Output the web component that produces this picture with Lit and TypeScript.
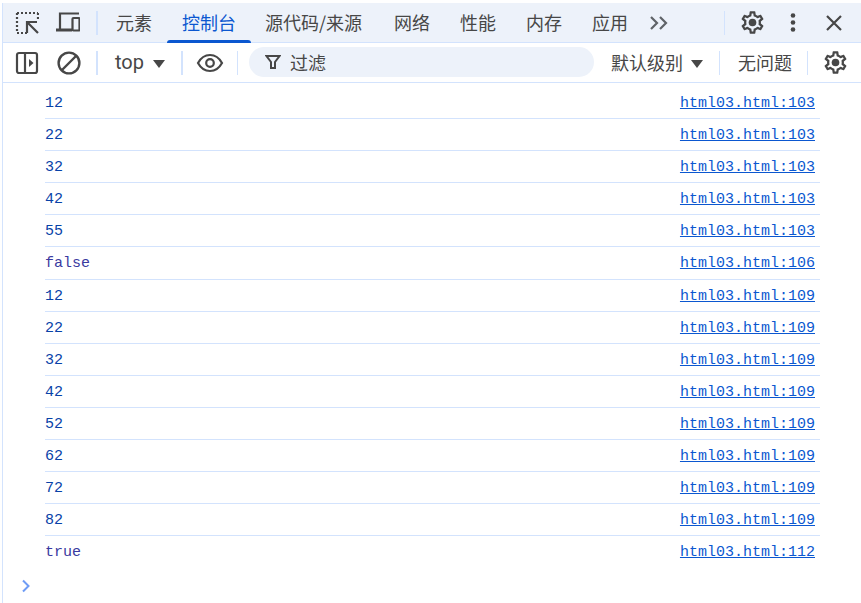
import { LitElement, html, css } from "lit";
import { customElement } from "lit/decorators.js";

const GEAR = "M19.43 12.98c.04-.32.07-.64.07-.98 0-.34-.03-.66-.07-.98l2.11-1.65c.19-.15.24-.42.12-.64l-2-3.46c-.09-.16-.26-.25-.44-.25-.06 0-.12.01-.17.03l-2.49 1c-.52-.4-1.08-.73-1.69-.98l-.38-2.65C14.46 2.18 14.25 2 14 2h-4c-.25 0-.46.18-.49.42l-.38 2.65c-.61.25-1.17.59-1.69.98l-2.49-1c-.06-.02-.12-.03-.18-.03-.17 0-.34.09-.43.25l-2 3.46c-.13.22-.07.49.12.64l2.11 1.65c-.04.32-.07.65-.07.98 0 .33.03.66.07.98l-2.11 1.65c-.19.15-.24.42-.12.64l2 3.46c.09.16.26.25.44.25.06 0 .12-.01.17-.03l2.49-1c.52.4 1.08.73 1.69.98l.38 2.65c.03.24.24.42.49.42h4c.25 0 .46-.18.49-.42l.38-2.65c.61-.25 1.17-.59 1.69-.98l2.49 1c.06.02.12.03.18.03.17 0 .34-.09.43-.25l2-3.46c.12-.22.07-.49-.12-.64l-2.11-1.65zm-1.98-1.71c.04.31.05.52.05.73 0 .21-.02.43-.05.73l-.14 1.13.89.7 1.08.84-.7 1.21-1.27-.51-1.04-.42-.9.68c-.43.32-.84.56-1.25.73l-1.06.43-.16 1.13-.2 1.35h-1.4l-.19-1.35-.16-1.13-1.06-.43c-.43-.18-.83-.41-1.23-.71l-.91-.7-1.06.43-1.27.51-.7-1.21 1.08-.84.89-.7-.14-1.13c-.03-.31-.05-.54-.05-.74s.02-.43.05-.73l.14-1.13-.89-.7-1.08-.84.7-1.21 1.27.51 1.04.42.9-.68c.43-.32.84-.56 1.25-.73l1.06-.43.16-1.13.2-1.35h1.39l.19 1.35.16 1.13 1.06.43c.43.18.83.41 1.23.71l.91.7 1.06-.43 1.27-.51.7 1.21-1.07.85-.89.7.14 1.13z";

const gear = html`<svg class="gear" viewBox="0 0 24 24"><path fill="#474747" d=${GEAR}></path><circle cx="12" cy="12" r="3.4" fill="#474747"></circle></svg>`;

const inspect = html`<svg class="ic" viewBox="0 0 24 24" fill="none" stroke="#474747">
  <path stroke-width="2.2" stroke-dasharray="2 2" d="M2 2H23M2 2V22H12M23 2V9"></path>
  <path stroke-width="2.2" d="M12 22V11H22M12 11L23 22" ></path></svg>`;
const device = html`<svg class="ic" viewBox="0 0 24 24" fill="none" stroke="#474747" stroke-width="2.2">
  <path d="M4 19V2.5H23"></path><path d="M0 19H16" stroke-width="3"></path><rect x="16.5" y="7" width="7" height="12.5" rx="1"></rect></svg>`;
const dock = html`<svg class="ic" viewBox="0 0 24 24" fill="none" stroke="#474747" stroke-width="2.2">
  <rect x="2" y="2" width="20" height="20" rx="2"></rect><path d="M10 2V22"></path><path d="M14 8L18.5 12L14 16Z" fill="#474747" stroke="none"></path></svg>`;
const block = html`<svg class="ic" viewBox="0 0 24 24" fill="none" stroke="#474747" stroke-width="2.4">
  <circle cx="12" cy="12" r="10.4"></circle><path d="M5 19L19 5"></path></svg>`;
const eye = html`<svg class="eye" viewBox="0 0 28 20" fill="none" stroke="#474747" stroke-width="2.2">
  <path d="M2 10C5 4.5 9 2 14 2S23 4.5 26 10C23 15.5 19 18 14 18S5 15.5 2 10Z"></path><circle cx="14" cy="10" r="3.8"></circle></svg>`;
const funnel = html`<svg class="funnel" viewBox="0 0 16 16" fill="none" stroke="#474747" stroke-width="2">
  <path d="M1.5 2H14.5L10 8V14H6V8Z" stroke-linejoin="miter"></path></svg>`;
const chevrons = html`<svg class="chev" viewBox="0 0 18 14" fill="none" stroke="#5f6368" stroke-width="2.2">
  <path d="M1 1L7 7L1 13M10 1L16 7L10 13"></path></svg>`;
const kebab = html`<svg class="kebab" viewBox="0 0 6 24" fill="#474747"><circle cx="3" cy="4.5" r="2.3"></circle><circle cx="3" cy="11.5" r="2.3"></circle><circle cx="3" cy="18.5" r="2.3"></circle></svg>`;
const close = html`<svg class="close" viewBox="0 0 16 16" fill="none" stroke="#474747" stroke-width="2.2"><path d="M1 1L15 15M15 1L1 15"></path></svg>`;
const prompt = html`<svg class="prompt" viewBox="0 0 9 14" fill="none" stroke="#6f9cf5" stroke-width="2"><path d="M2 1.5L7.5 7L2 12.5"></path></svg>`;

const TABS = ["元素", "控制台", "源代码/来源", "网络", "性能", "内存", "应用"];
const ROWS: [string, string][] = [
  ["12", "103"], ["22", "103"], ["32", "103"], ["42", "103"], ["55", "103"],
  ["false", "106"],
  ["12", "109"], ["22", "109"], ["32", "109"], ["42", "109"], ["52", "109"], ["62", "109"], ["72", "109"], ["82", "109"],
  ["true", "112"],
];

@customElement("app-root")
export class AppRoot extends LitElement {
  static styles = css`
    :host {
      display: block;
      height: 603px;
      box-sizing: border-box;
      padding: 3px 0 0 2px;
      background: #fff;
      font-family: "Noto Sans CJK SC", "Liberation Sans", sans-serif;
      color: #474747;
      overflow: hidden;
    }
    .frame { border-left: 1px solid #d3e3fd; height: 600px; }
    .bar {
      display: flex;
      align-items: center;
      height: 39px;
      border-bottom: 1px solid #d3e3fd;
      box-sizing: content-box;
      font-size: 18px;
      white-space: nowrap;
    }
    .tabsbar { background: #edf2fa; padding-left: 12px; }
    .tools { background: #fff; padding-left: 12px; }
    .ic { width: 24px; height: 24px; flex: none; }
    .ic + .ic { margin-left: 17px; }
    .tools .ic + .ic { margin-left: 18px; }
    .sep { width: 2px; height: 24px; background: #d3e3fd; flex: none; margin-left: 16px; }
    .tools .ic + .sep { margin-left: 15px; }
    .sep.thin { width: 1px; }
    .tab {
      position: relative;
      height: 39px;
      display: flex;
      align-items: center;
      padding: 0 15px 2px;
      box-sizing: border-box;
      flex: none;
    }
    .tab.wide { padding-left: 14px; padding-right: 17px; }
    .tabs { display: flex; margin-left: 3px; }
    .tab.active { color: #0b57d0; }
    .tab.active::after {
      content: "";
      position: absolute;
      left: 0; right: 0; bottom: -1px;
      height: 3px;
      border-radius: 3px 3px 0 0;
      background: #0b57d0;
    }
    .chev { width: 18px; height: 14px; margin-left: 7px; flex: none; }
    .sep.hr { margin-left: 56px; }
    .gear { width: 27px; height: 27px; flex: none; margin-bottom: 1px; }
    .tabsbar .gear { margin-left: 14px; }
    .kebab { width: 6px; height: 24px; margin-left: 24px; flex: none; }
    .close { width: 16px; height: 16px; margin-left: 30px; flex: none; }
    .top { margin-left: 17px; font-family: "Roboto", sans-serif; font-size: 20px; padding-bottom: 2px; }
    .tri {
      width: 0; height: 0; flex: none;
      border-left: 6px solid transparent;
      border-right: 6px solid transparent;
      border-top: 8px solid #474747;
    }
    .tri.t1 { margin: 3px 0 0 9px; }
    .sep.s2 { margin-left: 16px; }
    .eye { width: 28px; height: 20px; margin-left: 13px; flex: none; }
    .sep.s3 { margin-left: 13px; }
    .pill {
      margin-left: 11px;
      margin-bottom: 1px;
      width: 345px; height: 30px;
      flex: none;
      background: #edf2fa;
      border-radius: 15px;
      display: flex;
      align-items: center;
      padding-left: 16px;
      box-sizing: border-box;
      color: #474747;
    }
    .funnel { width: 16px; height: 16px; flex: none; }
    .pill span { margin-left: 9px; }
    .level { margin-left: 17px; padding-bottom: 2px; }
    .tri.t2 { margin: 3px 0 0 8px; }
    .sep.s4 { margin-left: 16px; }
    .issues { margin-left: 18px; padding-bottom: 2px; }
    .sep.s5 { margin-left: 15px; }
    .tools .gear { margin-left: 14px; }
    .console { padding: 3.95px 0 0 42px; }
    .row {
      width: 775px;
      height: 32.1px;
      box-sizing: border-box;
      border-bottom: 1px solid #d3e3fd;
      display: flex;
      justify-content: space-between;
      align-items: center;
      padding: 2px 5px 0 0;
      font-family: "Liberation Mono", monospace;
      font-size: 15px;
    }
    .row.last { border-bottom-color: transparent; }
    .val { color: #0842a8; }
    .val.bool { color: #3a3aa0; }
    .link { color: #0b57d0; text-decoration: underline; }
    .prompt { display: block; width: 9px; height: 14px; margin: 11px 0 0 -24px; }
  `;

  render() {
    return html`<div class="frame">
      <div class="bar tabsbar">
        ${inspect}${device}
        <div class="sep"></div>
        <div class="tabs">
          ${TABS.map((t) => html`<div class="tab ${t === "控制台" ? "active" : ""} ${t.length > 4 ? "wide" : ""}">${t}</div>`)}
        </div>
        ${chevrons}
        <div class="sep thin hr"></div>
        ${gear}${kebab}${close}
      </div>
      <div class="bar tools">
        ${dock}${block}
        <div class="sep"></div>
        <div class="top">top</div><div class="tri t1"></div>
        <div class="sep s2"></div>
        ${eye}
        <div class="sep thin s3"></div>
        <div class="pill">${funnel}<span>过滤</span></div>
        <div class="level">默认级别</div><div class="tri t2"></div>
        <div class="sep thin s4"></div>
        <div class="issues">无问题</div>
        <div class="sep thin s5"></div>
        ${gear}
      </div>
      <div class="console">
        ${ROWS.map(([v, l], i) => html`<div class="row ${i === ROWS.length - 1 ? "last" : ""}">
          <span class="val ${v === "true" || v === "false" ? "bool" : ""}">${v}</span>
          <span class="link">html03.html:${l}</span>
        </div>`)}
        ${prompt}
      </div>
    </div>`;
  }
}
